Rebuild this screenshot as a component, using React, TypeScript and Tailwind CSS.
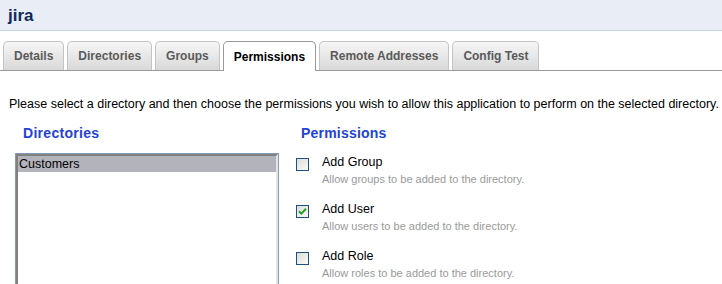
import React from 'react';

const TABS = ['Details', 'Directories', 'Groups', 'Permissions', 'Remote Addresses', 'Config Test'];

const PERMISSIONS = [
  { label: 'Add Group', desc: 'Allow groups to be added to the directory.', checked: false },
  { label: 'Add User', desc: 'Allow users to be added to the directory.', checked: true },
  { label: 'Add Role', desc: 'Allow roles to be added to the directory.', checked: false },
];

function Checkbox({ checked }: { checked: boolean }) {
  return (
    <span className="flex h-[13px] w-[13px] shrink-0 items-center justify-center border border-[#1c5180] bg-gradient-to-br from-[#dcdcd7] to-[#fbfbf9]">
      {checked && (
        <svg width="9" height="9" viewBox="0 0 9 9">
          <path d="M1 4.2 L3.4 6.6 L8 1.8" fill="none" stroke="#21a121" strokeWidth="2" />
        </svg>
      )}
    </span>
  );
}

export default function App() {
  return (
    <div className="h-[284px] w-[722px] overflow-hidden bg-white font-['Liberation_Sans',Arial,sans-serif]">
      {/* Title bar */}
      <div className="flex h-[31px] items-center border-b border-[#c2d3ea] bg-[#e9eef6] px-[8px]">
        <span className="text-[17px] font-bold leading-none text-[#0f2a5c]">jira</span>
      </div>

      {/* Tabs */}
      <div className="mt-[10px] flex items-end gap-[3px] border-b border-[#9a9a9a] pl-[3px]">
        {TABS.map(tab => {
          const active = tab === 'Permissions';
          return (
            <div
              key={tab}
              className={
                active
                  ? 'relative -mb-px flex h-[30px] items-center rounded-t-[5px] border border-b-0 border-[#9a9a9a] bg-white px-[10px] text-[12px] font-bold text-black'
                  : 'flex h-[29px] items-center rounded-t-[5px] border border-b-0 border-[#c4c4c4] bg-gradient-to-b from-[#f6f6f6] to-[#d9d9d9] px-[10px] text-[12px] font-bold text-[#5a5a5a]'
              }
            >
              {tab}
            </div>
          );
        })}
      </div>

      <p className="mt-[26px] pl-[9px] text-[12.5px] leading-[14px] text-black">
        Please select a directory and then choose the permissions you wish to allow this application to perform on the selected directory.
      </p>

      <div className="mt-[14px] flex">
        {/* Directories */}
        <div className="ml-[15px] w-[264px]">
          <h3 className="pl-[8px] text-[14px] font-bold leading-[16px] tracking-[0.3px] text-[#2343d4]">Directories</h3>
          <div className="mt-[12px] h-[140px] border border-[#7f9db9]">
            <div className="h-full border-l-2 border-t-2 border-r-2 border-l-[#808080] border-t-[#808080] border-r-[#e4e4e4] bg-white">
              <div className="h-[16px] bg-[#b3b3bc] pl-[1px] text-[12.5px] leading-[16px] text-black">Customers</div>
            </div>
          </div>
        </div>

        {/* Permissions */}
        <div className="ml-[17px]">
          <h3 className="pl-[5px] text-[14px] font-bold leading-[16px] tracking-[0.2px] text-[#2343d4]">Permissions</h3>
          <div className="mt-[14px] flex flex-col gap-[16px]">
            {PERMISSIONS.map(p => (
              <div key={p.label} className="flex items-start gap-[13px]">
                <div className="pt-[3px]">
                  <Checkbox checked={p.checked} />
                </div>
                <div>
                  <div className="text-[12.5px] leading-[15px] text-black">{p.label}</div>
                  <div className="mt-[3px] text-[11px] leading-[13px] text-[#9a9a9a]">{p.desc}</div>
                </div>
              </div>
            ))}
          </div>
        </div>
      </div>
    </div>
  );
}
